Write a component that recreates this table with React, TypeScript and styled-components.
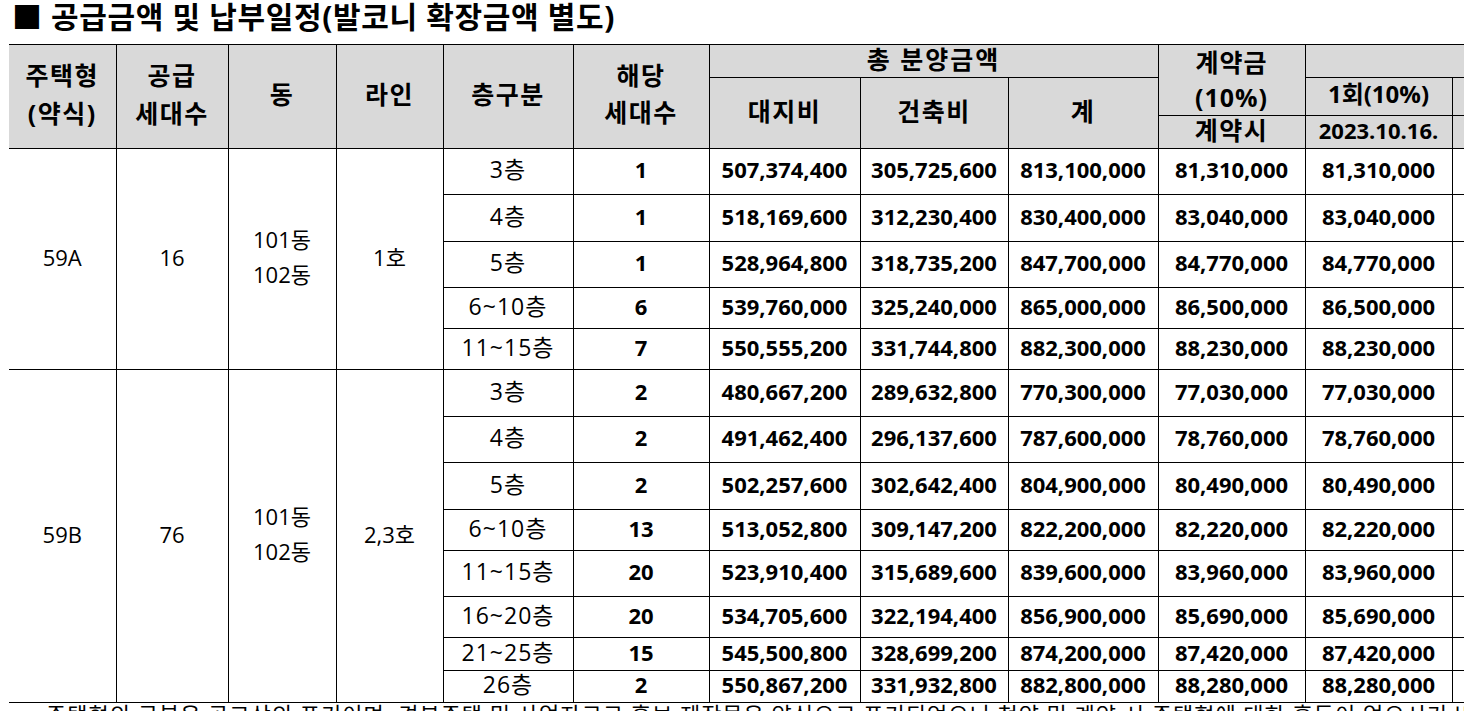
import React from "react";
import styled, { createGlobalStyle } from "styled-components";

const GlobalStyle = createGlobalStyle`
  html, body {
    margin: 0;
    padding: 0;
    overflow: hidden;
    background: #ffffff;
  }
  body {
    font-family: "Open Sans", "Noto Sans CJK KR", sans-serif;
    color: #000000;
  }
`;

const Page = styled.div`
  padding-left: 9px;
  width: 1700px;
`;

const Title = styled.h1`
  margin: 0 0 10px 0;
  padding-left: 3px;
  height: 34px;
  font-size: 30px;
  line-height: 34px;
  letter-spacing: 0.65px;
  font-weight: 700;
  white-space: nowrap;
`;

const Table = styled.table`
  border-collapse: collapse;
  table-layout: fixed;
  width: 1591px;
  font-size: 22px;
`;

const HeadCell = styled.th<{ $lh?: number; $size?: number; $ls?: number; $pb?: number }>`
  background: #d9d9d9;
  border: 1px solid #000000;
  font-weight: 700;
  font-size: ${(p) => p.$size ?? 25}px;
  letter-spacing: ${(p) => p.$ls ?? 1.5}px;
  text-align: center;
  vertical-align: middle;
  padding: 0 0 ${(p) => p.$pb ?? 5}px 0;
  line-height: ${(p) => p.$lh ?? 26}px;
  white-space: nowrap;
  &:first-child {
    border-left: none;
  }
`;

const Cell = styled.td<{ $bold?: boolean; $lh?: number }>`
  border: 1px solid #000000;
  text-align: center;
  vertical-align: middle;
  padding: 0 0 5px 0;
  line-height: ${(p) => p.$lh ?? 24}px;
  font-weight: ${(p) => (p.$bold ? 700 : 400)};
  white-space: nowrap;
`;

const FloorCell = styled(Cell)`
  font-size: 23px;
  letter-spacing: 1px;
`;

const GroupCell = styled(Cell)`
  &:first-child {
    border-left: none;
  }
`;

const Row = styled.tr<{ $h: number }>`
  height: ${(p) => p.$h}px;
`;

const Footer = styled.p`
  margin: 0;
  padding-left: 37px;
  font-size: 22px;
  line-height: 22px;
  letter-spacing: 1px;
  white-space: nowrap;
`;

type FloorRow = {
  floor: string;
  units: string;
  land: string;
  build: string;
  total: string;
  deposit: string;
  first: string;
  h: number;
};

type Group = {
  type: string;
  supply: string;
  line: string;
  rows: FloorRow[];
};

const groups: Group[] = [
  {
    type: "59A",
    supply: "16",
    line: "1호",
    rows: [
      { floor: "3층", units: "1", land: "507,374,400", build: "305,725,600", total: "813,100,000", deposit: "81,310,000", first: "81,310,000", h: 46 },
      { floor: "4층", units: "1", land: "518,169,600", build: "312,230,400", total: "830,400,000", deposit: "83,040,000", first: "83,040,000", h: 47 },
      { floor: "5층", units: "1", land: "528,964,800", build: "318,735,200", total: "847,700,000", deposit: "84,770,000", first: "84,770,000", h: 46 },
      { floor: "6~10층", units: "6", land: "539,760,000", build: "325,240,000", total: "865,000,000", deposit: "86,500,000", first: "86,500,000", h: 41 },
      { floor: "11~15층", units: "7", land: "550,555,200", build: "331,744,800", total: "882,300,000", deposit: "88,230,000", first: "88,230,000", h: 41 },
    ],
  },
  {
    type: "59B",
    supply: "76",
    line: "2,3호",
    rows: [
      { floor: "3층", units: "2", land: "480,667,200", build: "289,632,800", total: "770,300,000", deposit: "77,030,000", first: "77,030,000", h: 47 },
      { floor: "4층", units: "2", land: "491,462,400", build: "296,137,600", total: "787,600,000", deposit: "78,760,000", first: "78,760,000", h: 46 },
      { floor: "5층", units: "2", land: "502,257,600", build: "302,642,400", total: "804,900,000", deposit: "80,490,000", first: "80,490,000", h: 47 },
      { floor: "6~10층", units: "13", land: "513,052,800", build: "309,147,200", total: "822,200,000", deposit: "82,220,000", first: "82,220,000", h: 41 },
      { floor: "11~15층", units: "20", land: "523,910,400", build: "315,689,600", total: "839,600,000", deposit: "83,960,000", first: "83,960,000", h: 46 },
      { floor: "16~20층", units: "20", land: "534,705,600", build: "322,194,400", total: "856,900,000", deposit: "85,690,000", first: "85,690,000", h: 41 },
      { floor: "21~25층", units: "15", land: "545,500,800", build: "328,699,200", total: "874,200,000", deposit: "87,420,000", first: "87,420,000", h: 33 },
      { floor: "26층", units: "2", land: "550,867,200", build: "331,932,800", total: "882,800,000", deposit: "88,280,000", first: "88,280,000", h: 32 },
    ],
  },
];

const colWidths = [107, 112, 108, 107, 130, 136, 151, 148, 150, 147, 147, 148];

export default function App() {
  return (
    <Page>
      <GlobalStyle />
      <Title>■ 공급금액 및 납부일정(발코니 확장금액 별도)</Title>
      <Table>
        <colgroup>
          {colWidths.map((w, i) => (
            <col key={i} style={{ width: `${w}px` }} />
          ))}
        </colgroup>
        <thead>
          <Row $h={33}>
            <HeadCell rowSpan={3} $lh={38}>
              주택형
              <br />
              (약식)
            </HeadCell>
            <HeadCell rowSpan={3} $lh={38}>
              공급
              <br />
              세대수
            </HeadCell>
            <HeadCell rowSpan={3}>동</HeadCell>
            <HeadCell rowSpan={3}>라인</HeadCell>
            <HeadCell rowSpan={3}>층구분</HeadCell>
            <HeadCell rowSpan={3} $lh={37}>
              해당
              <br />
              세대수
            </HeadCell>
            <HeadCell colSpan={3} $ls={2}>
              총 분양금액
            </HeadCell>
            <HeadCell rowSpan={2} $lh={35} $ls={1} $pb={0}>
              계약금
              <br />
              (10%)
            </HeadCell>
            <HeadCell colSpan={2}></HeadCell>
          </Row>
          <Row $h={37}>
            <HeadCell rowSpan={2}>대지비</HeadCell>
            <HeadCell rowSpan={2}>건축비</HeadCell>
            <HeadCell rowSpan={2}>계</HeadCell>
            <HeadCell $size={24} $ls={0}>
              1회(10%)
            </HeadCell>
            <HeadCell></HeadCell>
          </Row>
          <Row $h={33}>
            <HeadCell>계약시</HeadCell>
            <HeadCell $size={22} $ls={0}>
              2023.10.16.
            </HeadCell>
            <HeadCell></HeadCell>
          </Row>
        </thead>
        <tbody>
          {groups.map((g) =>
            g.rows.map((r, i) => (
              <Row key={`${g.type}-${r.floor}`} $h={r.h}>
                {i === 0 && (
                  <>
                    <GroupCell rowSpan={g.rows.length}>{g.type}</GroupCell>
                    <GroupCell rowSpan={g.rows.length}>{g.supply}</GroupCell>
                    <GroupCell rowSpan={g.rows.length} $lh={35}>
                      101동
                      <br />
                      102동
                    </GroupCell>
                    <GroupCell rowSpan={g.rows.length}>{g.line}</GroupCell>
                  </>
                )}
                <FloorCell>{r.floor}</FloorCell>
                <Cell $bold>{r.units}</Cell>
                <Cell $bold>{r.land}</Cell>
                <Cell $bold>{r.build}</Cell>
                <Cell $bold>{r.total}</Cell>
                <Cell $bold>{r.deposit}</Cell>
                <Cell $bold>{r.first}</Cell>
                <Cell></Cell>
              </Row>
            ))
          )}
        </tbody>
      </Table>
      <Footer>
        주택형의 구분은 공고상의 표기이며, 견본주택 및 사업자료로 홍보 제작물은 약식으로 표기되었으니 청약 및 계약 시 주택형에 대한 혼동이 없으시기 바랍니다.
      </Footer>
    </Page>
  );
}
